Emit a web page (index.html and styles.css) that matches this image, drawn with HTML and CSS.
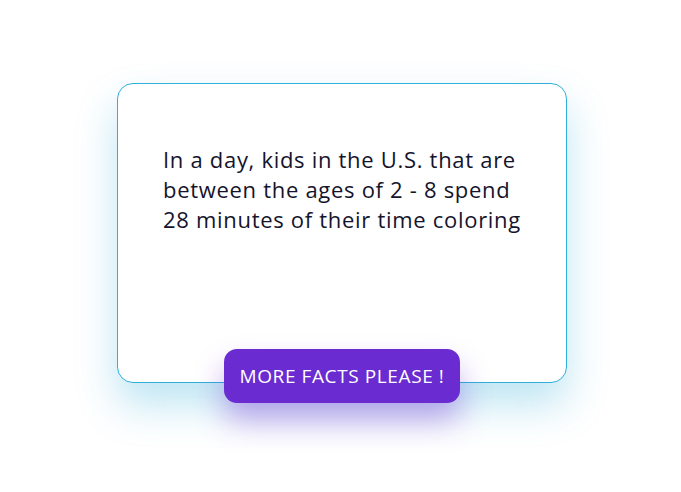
FILE: index.html
```html
<!DOCTYPE html>
<html>
<head>
<meta charset="utf-8">
<link rel="stylesheet" href="styles.css">
</head>
<body>
<main class="stage">
  <section class="card">
    <p class="fact">In a day, kids in the U.S. that are<br>between the ages of 2 - 8 spend<br>28 minutes of their time coloring</p>
    <button class="more">MORE FACTS PLEASE !</button>
  </section>
</main>
</body>
</html>
```

FILE: styles.css
```css
html, body {
  margin: 0;
  padding: 0;
  background: #ffffff;
}
.stage {
  width: 681px;
  height: 492px;
  display: flex;
  justify-content: center;
  align-items: flex-start;
  padding-top: 83px;
  box-sizing: border-box;
  padding-left: 3px;
}
.card {
  position: relative;
  width: 450px;
  height: 300px;
  box-sizing: border-box;
  border: 1px solid #2fb0da;
  border-radius: 16px;
  background: #fff;
  box-shadow: 0 22px 40px rgba(40, 170, 215, 0.3);
  padding: 60px 10px 0 45px;
}
.fact {
  margin: 0;
  font-family: "Open Sans", "Noto Sans", sans-serif;
  font-size: 22px;
  line-height: 30px;
  color: #14142c;
  font-weight: 400;
  letter-spacing: 0.7px;
  white-space: nowrap;
}
.more {
  position: absolute;
  left: 50%;
  bottom: -21px;
  transform: translateX(-50%);
  width: 236px;
  height: 54px;
  border: none;
  border-radius: 13px;
  background: #6a2bd0;
  color: #fff;
  font-family: "Open Sans", "Noto Sans", sans-serif;
  font-weight: 400;
  font-size: 19px;
  letter-spacing: 0.6px;
  white-space: nowrap;
  box-shadow: 0 18px 30px rgba(106, 43, 208, 0.38);
  padding: 0;
}
```
